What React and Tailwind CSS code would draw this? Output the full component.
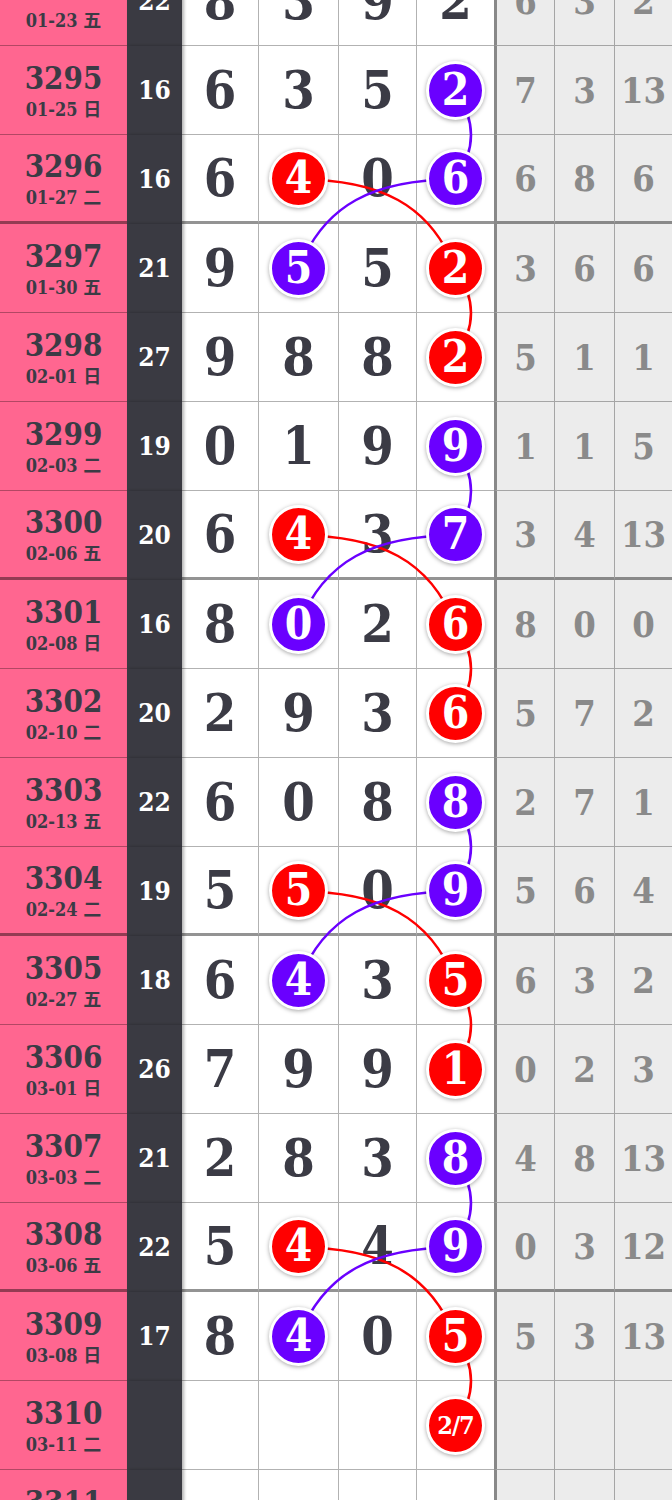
const ROW_H = 89;
const C2 = 299;
const C4 = 455;

// b: ball colour per digit column (r = red, p = purple)
const rows = [
  { id: '3294', date: '01-23', wd: '五', sum: 22, n: [8, 3, 9, 2], b: [], g: [6, 3, 2] },
  { id: '3295', date: '01-25', wd: '日', sum: 16, n: [6, 3, 5, 2], b: [null, null, null, 'p'], g: [7, 3, 13] },
  { id: '3296', date: '01-27', wd: '二', sum: 16, n: [6, 4, 0, 6], b: [null, 'r', null, 'p'], g: [6, 8, 6], thick: true },
  { id: '3297', date: '01-30', wd: '五', sum: 21, n: [9, 5, 5, 2], b: [null, 'p', null, 'r'], g: [3, 6, 6] },
  { id: '3298', date: '02-01', wd: '日', sum: 27, n: [9, 8, 8, 2], b: [null, null, null, 'r'], g: [5, 1, 1] },
  { id: '3299', date: '02-03', wd: '二', sum: 19, n: [0, 1, 9, 9], b: [null, null, null, 'p'], g: [1, 1, 5] },
  { id: '3300', date: '02-06', wd: '五', sum: 20, n: [6, 4, 3, 7], b: [null, 'r', null, 'p'], g: [3, 4, 13], thick: true },
  { id: '3301', date: '02-08', wd: '日', sum: 16, n: [8, 0, 2, 6], b: [null, 'p', null, 'r'], g: [8, 0, 0] },
  { id: '3302', date: '02-10', wd: '二', sum: 20, n: [2, 9, 3, 6], b: [null, null, null, 'r'], g: [5, 7, 2] },
  { id: '3303', date: '02-13', wd: '五', sum: 22, n: [6, 0, 8, 8], b: [null, null, null, 'p'], g: [2, 7, 1] },
  { id: '3304', date: '02-24', wd: '二', sum: 19, n: [5, 5, 0, 9], b: [null, 'r', null, 'p'], g: [5, 6, 4], thick: true },
  { id: '3305', date: '02-27', wd: '五', sum: 18, n: [6, 4, 3, 5], b: [null, 'p', null, 'r'], g: [6, 3, 2] },
  { id: '3306', date: '03-01', wd: '日', sum: 26, n: [7, 9, 9, 1], b: [null, null, null, 'r'], g: [0, 2, 3] },
  { id: '3307', date: '03-03', wd: '二', sum: 21, n: [2, 8, 3, 8], b: [null, null, null, 'p'], g: [4, 8, 13] },
  { id: '3308', date: '03-06', wd: '五', sum: 22, n: [5, 4, 4, 9], b: [null, 'r', null, 'p'], g: [0, 3, 12], thick: true },
  { id: '3309', date: '03-08', wd: '日', sum: 17, n: [8, 4, 0, 5], b: [null, 'p', null, 'r'], g: [5, 3, 13] },
  { id: '3310', date: '03-11', wd: '二', sum: null, n: [null, null, null, '2/7'], b: [null, null, null, 'r'], g: [] },
  { id: '3311', date: '03-13', wd: '五', sum: null, n: [], b: [], g: [] },
];

const RED = '#ff0000';
const PURPLE = '#6a00ff';

const cy = (i) => i * ROW_H + 44.5;

function Links() {
  const paths = [];
  // connectors down the last column
  [[1, 'p'], [3, 'r'], [5, 'p'], [7, 'r'], [9, 'p'], [11, 'r'], [13, 'p'], [15, 'r']].forEach(([i, c]) => {
    const y1 = cy(i);
    const y2 = cy(i + 1);
    paths.push({ d: `M ${C4} ${y1} Q ${C4 + 32} ${(y1 + y2) / 2} ${C4} ${y2}`, c });
  });
  // crossing curves
  [2, 6, 10, 14].forEach((i) => {
    const y1 = cy(i);
    const y2 = cy(i + 1);
    paths.push({ d: `M ${C2} ${y1} C ${C2 + 81} ${y1} ${C2 + 131} ${y1 + 25} ${C4} ${y2}`, c: 'r' });
    paths.push({ d: `M ${C4} ${y1} C ${C4 - 81} ${y1} ${C4 - 131} ${y1 + 25} ${C2} ${y2}`, c: 'p' });
  });
  return (
    <svg
      className="absolute left-0 top-0 z-[5] pointer-events-none"
      width="672"
      height={rows.length * ROW_H}
    >
      {paths.map((p, k) => (
        <path key={k} d={p.d} fill="none" stroke={p.c === 'r' ? RED : PURPLE} strokeWidth="2.5" />
      ))}
    </svg>
  );
}

function Ball({ color, value }) {
  const small = String(value).length > 1;
  return (
    <div
      className={`relative z-10 w-[59px] h-[59px] rounded-full border-[3px] border-white shadow-[0_1px_4px_rgba(0,0,0,0.35)] flex items-center justify-center text-white font-bold leading-none ${
        color === 'r' ? 'bg-[#ff0000]' : 'bg-[#6a00ff]'
      } ${small ? 'text-[25px] tracking-[-1px]' : 'text-[44px]'}`}
    >
      {value}
    </div>
  );
}

function Row({ r }) {
  const line = r.thick ? 'border-b-[3px] border-b-[rgba(0,0,0,0.42)]' : 'border-b border-b-[rgba(0,0,0,0.3)]';
  const widths = ['w-[77px] border-r', 'w-[80px] border-r', 'w-[78px] border-r', 'w-[77px]'];
  const gw = ['w-[61px] border-l-[3px] border-l-[rgba(0,0,0,0.42)] border-r', 'w-[60px] border-r', 'w-[57px]'];

  return (
    <div className="flex h-[89px]">
      <div className={`w-[127px] bg-[#ff6690] flex flex-col items-center justify-center text-[#3b3b45] ${line}`}>
        <div className="text-[31px] font-bold leading-[38px]">{r.id}</div>
        <div className="mt-[2px] text-[18px] font-bold leading-[22px]">
          {r.date} {r.wd}
        </div>
      </div>
      <div className="w-[55px] bg-[#3a3a42] relative z-[2] shadow-[2px_0_3px_rgba(0,0,0,0.3)] flex items-center justify-center text-white text-[26px] font-bold">
        {r.sum}
      </div>
      {widths.map((w, k) => (
        <div
          key={k}
          className={`${w} border-r-[rgba(0,0,0,0.3)] bg-white flex items-center justify-center text-[#3b3b45] text-[52px] font-bold leading-none ${line}`}
        >
          {r.b[k] ? <Ball color={r.b[k]} value={r.n[k]} /> : r.n[k]}
        </div>
      ))}
      {gw.map((w, k) => (
        <div
          key={k}
          className={`${w} border-r-[rgba(0,0,0,0.3)] bg-[#ececec] flex items-center justify-center text-[#8a8a8a] text-[36px] font-bold leading-none ${line}`}
        >
          {r.g[k]}
        </div>
      ))}
    </div>
  );
}

export default function App() {
  return (
    <div className="h-[1500px] w-[672px] overflow-hidden bg-white font-['DejaVu_Serif_Condensed','DejaVu_Serif','Noto_Sans_CJK_SC',serif]">
      <div className="relative -mt-[43px]">
        {rows.map((r) => (
          <Row key={r.id} r={r} />
        ))}
        <Links />
      </div>
    </div>
  );
}
